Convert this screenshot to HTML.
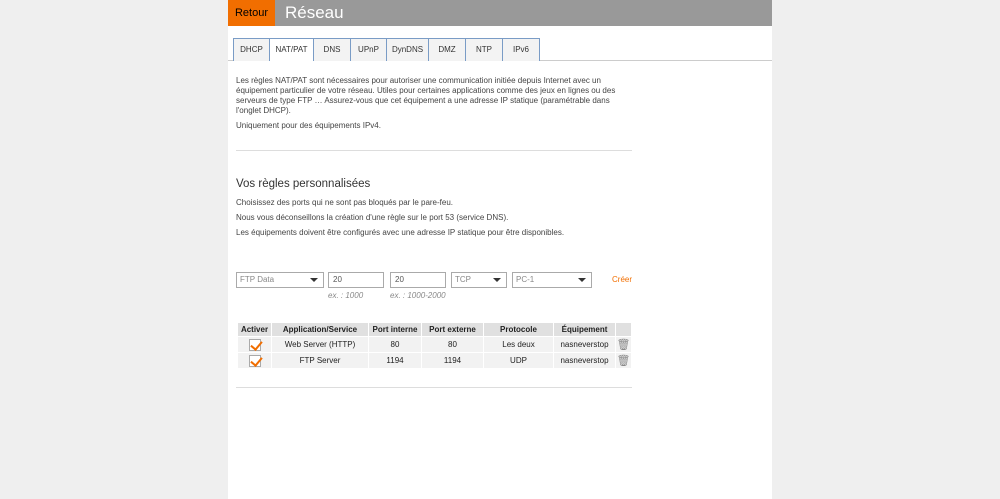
<!DOCTYPE html>
<html><head><meta charset="utf-8"><style>
*{margin:0;padding:0;box-sizing:border-box}
body{width:1000px;height:499px;background:#efefef;font-family:"Liberation Sans",Arial,sans-serif;color:#333;position:relative;overflow:hidden}
.main{position:absolute;left:228px;top:0;width:544px;height:499px;background:#fff}
.a{position:absolute}
.hdr{left:0;top:0;width:544px;height:26px;background:#999}
.ret{left:0;top:0;width:47px;height:26px;background:#f16e00;color:#000;font-size:11px;line-height:26px;text-align:center}
.title{left:57px;top:3px;font-size:17px;color:#fff}
.tab{position:absolute;top:38px;height:23px;border:1px solid #7a9cc6;border-bottom:none;background:#f3f3f3;font-size:8px;line-height:22px;text-align:center;color:#333}
.tab.on{background:#fff;height:23px}
.line{position:absolute;left:0;width:544px;height:1px;background:#ccc}
.p{position:absolute;left:8px;font-size:8px;line-height:10px;color:#444;width:400px}
.sep{position:absolute;left:8px;width:396px;height:1px;background:#ddd}
.sel{position:absolute;top:272px;height:16px;border:1px solid #aaa;font-size:8px;line-height:14px;padding-left:3px;color:#888}
.sel:after{content:"";position:absolute;right:5px;top:5px;border-left:4px solid transparent;border-right:4px solid transparent;border-top:4px solid #333}
.inp{position:absolute;top:272px;height:16px;border:1px solid #aaa;font-size:8px;line-height:14px;padding-left:4px;color:#555}
.ex{position:absolute;top:291px;font-size:8px;font-style:italic;color:#888}
table{position:absolute;left:9px;top:322px;border-collapse:separate;border-spacing:1px;font-size:8px}
th{background:#e0e0e0;height:13px;font-weight:bold;color:#222;padding:0}
td{background:#f2f2f2;height:15px;text-align:center;color:#222;padding:0}
.cb{display:inline-block;width:12px;height:12px;border:1px solid #aaa;background:#fff;position:relative;vertical-align:middle}
.cb:after{content:"";position:absolute;left:3px;top:-1px;width:5px;height:9px;border-right:2px solid #f16e00;border-bottom:2px solid #f16e00;transform:rotate(40deg)}
</style></head><body>
<div class="main">
<div class="a hdr"></div>
<div class="a ret">Retour</div>
<div class="a title">Réseau</div>
<div class="line" style="top:60px"></div>
<div class="tab" style="left:5px;width:37px">DHCP</div>
<div class="tab on" style="left:41px;width:45px">NAT/PAT</div>
<div class="tab" style="left:85px;width:38px">DNS</div>
<div class="tab" style="left:122px;width:37px">UPnP</div>
<div class="tab" style="left:158px;width:43px">DynDNS</div>
<div class="tab" style="left:200px;width:38px">DMZ</div>
<div class="tab" style="left:237px;width:38px">NTP</div>
<div class="tab" style="left:274px;width:38px">IPv6</div>
<div class="p" style="top:76px">Les règles NAT/PAT sont nécessaires pour autoriser une communication initiée depuis Internet avec un équipement particulier de votre réseau. Utiles pour certaines applications comme des jeux en lignes ou des serveurs de type FTP … Assurez-vous que cet équipement a une adresse IP statique (paramétrable dans l'onglet DHCP).</div>
<div class="p" style="top:121px">Uniquement pour des équipements IPv4.</div>
<div class="sep" style="top:150px"></div>
<div class="p" style="top:177px;font-size:11.5px;line-height:14px;color:#333">Vos règles personnalisées</div>
<div class="p" style="top:198px">Choisissez des ports qui ne sont pas bloqués par le pare-feu.</div>
<div class="p" style="top:213px">Nous vous déconseillons la création d'une règle sur le port 53 (service DNS).</div>
<div class="p" style="top:228px">Les équipements doivent être configurés avec une adresse IP statique pour être disponibles.</div>
<div class="sel" style="left:8px;width:88px">FTP Data</div>
<div class="inp" style="left:100px;width:56px">20</div>
<div class="inp" style="left:162px;width:56px">20</div>
<div class="sel" style="left:223px;width:56px">TCP</div>
<div class="sel" style="left:284px;width:80px">PC-1</div>
<div class="a" style="left:384px;top:275px;font-size:8px;color:#f16e00">Créer</div>
<div class="ex" style="left:100px">ex. : 1000</div>
<div class="ex" style="left:162px">ex. : 1000-2000</div>
<table>
<tr><th style="width:33px">Activer</th><th style="width:96px">Application/Service</th><th style="width:52px">Port interne</th><th style="width:61px">Port externe</th><th style="width:69px">Protocole</th><th style="width:61px">Équipement</th><th style="width:15px"></th></tr>
<tr><td><span class="cb"></span></td><td>Web Server (HTTP)</td><td>80</td><td>80</td><td>Les deux</td><td>nasneverstop</td><td style="color:#888;font-size:11px">🗑</td></tr>
<tr><td><span class="cb"></span></td><td>FTP Server</td><td>1194</td><td>1194</td><td>UDP</td><td>nasneverstop</td><td style="color:#888;font-size:11px">🗑</td></tr>
</table>
<div class="sep" style="top:387px"></div>
</div>
</body></html>
